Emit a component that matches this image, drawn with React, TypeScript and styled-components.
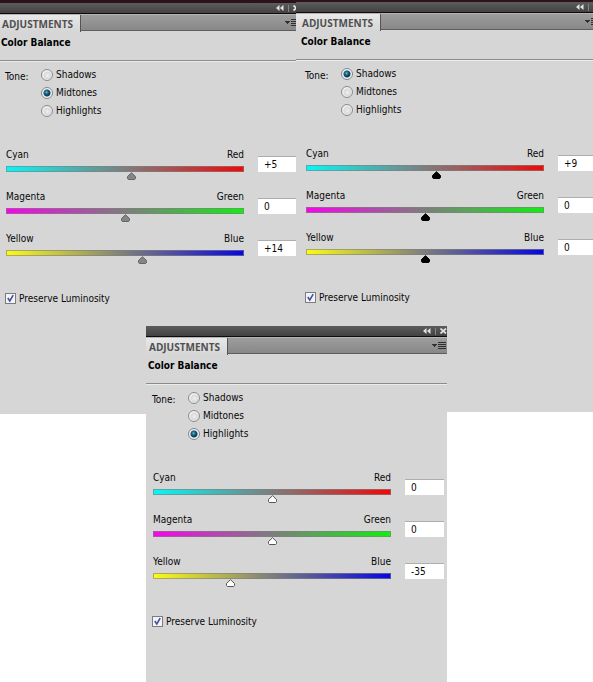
import React, { useId, useState } from "react";
import styled, { createGlobalStyle } from "styled-components";

const GlobalStyle = createGlobalStyle`
  *, *::before, *::after { box-sizing: border-box; }
  body {
    margin: 0;
    background: #fff;
    color: #080808;
    font-family: "DejaVu Sans Condensed", "DejaVu Sans", sans-serif;
    font-size: 10px;
    line-height: 14px;
    overflow-x: hidden;
  }
`;

const Page = styled.main`
  display: grid;
  grid-template-columns: minmax(0, 296fr) minmax(0, 297fr);
  align-items: start;
`;

const PanelFrame = styled.section<{ $edge: number; $bottom: number; $floating?: boolean }>`
  overflow: hidden;
  background: #d6d6d6;
  border-top: ${(p) => p.$edge}px solid #2c121b;
  padding-bottom: ${(p) => p.$bottom}px;
  ${(p) =>
    p.$floating &&
    `
    grid-column: 1 / -1;
    justify-self: center;
    margin-top: -88px;
    max-width: 100%;
  `}
`;

const PanelInner = styled.div<{ $inset: number }>`
  min-width: ${(p) => 300 + p.$inset}px;
`;

const TitleBar = styled.header`
  display: flex;
  justify-content: flex-end;
  align-items: center;
  height: 11px;
  background: linear-gradient(#5c5c5c, #424242);
  border-bottom: 1px solid #0c0c0c;
`;

const BarButton = styled.button`
  display: flex;
  padding: 0;
  border: 0;
  background: none;
  cursor: pointer;
`;

const BarSeparator = styled.span`
  width: 1px;
  height: 7px;
  margin: 0 4px;
  background: #858585;
`;

const TabBar = styled.nav`
  display: flex;
  justify-content: space-between;
  align-items: stretch;
  height: 17px;
  background: linear-gradient(#9d9d9d, #888);
  border-top: 1px solid #b4b4b4;
  border-bottom: 1px solid #5e5e5e;
`;

const Tab = styled.button<{ $inset: number }>`
  height: 17px;
  padding: 0 7px 0 ${(p) => p.$inset + 2}px;
  border: 0;
  border-right: 1px solid #555;
  background: linear-gradient(#e8e8e8, #d6d6d6);
  color: #505050;
  font: 700 10px/14px "Open Sans", "Noto Sans", sans-serif;
`;

const MenuButton = styled(BarButton)`
  align-items: center;
  padding-right: 1px;
`;

const Title = styled.h2<{ $inset: number }>`
  height: 31px;
  margin: 0;
  padding: 4px 0 0 ${(p) => p.$inset + 1}px;
  border-bottom: 1px solid #ececec;
  box-shadow: inset 0 -1px 0 #8c8c8c;
  color: #000;
  font-size: 10px;
  font-weight: bold;
  line-height: 16px;
`;

const Body = styled.div<{ $inset: number }>`
  padding: 4px 3px 0 ${(p) => p.$inset}px;
`;

const ToneGroup = styled.div`
  display: grid;
  grid-template-columns: 36px 1fr;
  padding-left: 5px;
`;

const ToneLabel = styled.span`
  padding-top: 4px;
`;

const ToneOptions = styled.div`
  display: flex;
  flex-direction: column;
`;

const Option = styled.label`
  display: flex;
  align-items: center;
  gap: 3px;
  height: 18px;
`;

const Radio = styled.input`
  appearance: none;
  width: 12px;
  height: 12px;
  margin: 0;
  border: 1px solid #8b8b8b;
  border-radius: 50%;
  background: radial-gradient(circle closest-side at 55% 55%, #efefef 0, #d9d9d9 75%, #f0f0f0 100%);
  &:checked {
    border-color: #7f8890;
    background:
      radial-gradient(circle at 45% 42%, #7ccbdc 0, #2d87a4 1px, transparent 3px),
      radial-gradient(circle at 50% 50%, #123f5c 0, #123f5c 3px, #f0f3f4 4px);
  }
`;

const Sliders = styled.div`
  display: flex;
  flex-direction: column;
  gap: 9px;
  padding: 27px 0 27px 6px;
`;

const SliderRow = styled.div`
  display: grid;
  grid-template-columns: 1fr 39px;
  column-gap: 14px;
`;

const SliderLabels = styled.div`
  display: flex;
  justify-content: space-between;
  margin: 1px 0 4px;
`;

const GradientBar = styled.div<{ $from: string; $to: string }>`
  height: 6px;
  border: 1px solid #808080a0;
  background: linear-gradient(90deg, ${(p) => p.$from}, #7d7d7d, ${(p) => p.$to}) border-box;
`;

type ToneName = "Shadows" | "Midtones" | "Highlights";

const thumbArt = (fill: string, stroke: string) =>
  `url("data:image/svg+xml,${encodeURIComponent(
    `<svg xmlns="http://www.w3.org/2000/svg" width="9" height="8"><path d="M4.5 .7L8.5 4.5V6.6L7.7 7.5H1.3L.5 6.6V4.5Z" fill="${fill}" stroke="${stroke}"/></svg>`
  )}")`;

const thumbs: Record<ToneName, string> = {
  Shadows: thumbArt("#000", "#000"),
  Midtones: thumbArt("#858585", "#666"),
  Highlights: thumbArt("#fff", "#555"),
};

const Range = styled.input<{ $tone: ToneName }>`
  appearance: none;
  display: block;
  width: calc(100% + 9px);
  height: 8px;
  margin: 0 -5px 0 -4px;
  background: none;
  &::-webkit-slider-thumb {
    appearance: none;
    width: 9px;
    height: 8px;
    border: 0;
    background: ${(p) => thumbs[p.$tone]} no-repeat;
  }
`;

const Field = styled.input`
  width: 100%;
  height: 16px;
  margin: 9px 0 0;
  padding: 0 0 0 6px;
  border: 0;
  border-top: 1px solid #adadad;
  background: #fff;
  color: #080808;
  font: inherit;
`;

const CheckRow = styled.label`
  display: flex;
  align-items: center;
  gap: 3px;
  height: 15px;
  padding-left: 5px;
`;

const CheckBox = styled.span`
  display: grid;
  width: 11px;
  height: 11px;
  > * {
    grid-area: 1 / 1;
  }
  > svg {
    pointer-events: none;
    visibility: hidden;
  }
  > input:checked + svg {
    visibility: visible;
  }
`;

const CheckInput = styled.input`
  appearance: none;
  width: 11px;
  height: 11px;
  margin: 0;
  border: 1px solid #7c7c7c;
  background: #f3f4f7;
`;

const tones: ToneName[] = ["Shadows", "Midtones", "Highlights"];

const channels = [
  { low: "Cyan", high: "Red", from: "#08f6f6", to: "#f00808" },
  { low: "Magenta", high: "Green", from: "#f605ea", to: "#12ee12" },
  { low: "Yellow", high: "Blue", from: "#fbfb18", to: "#0606e0" },
];

const signed = (n: number) => (n > 0 ? `+${n}` : String(n));

interface PanelProps {
  tone: ToneName;
  initial: number[];
  inset: number;
  edge: number;
  bottom: number;
  floating?: boolean;
}

function ColorBalancePanel({ tone, initial, inset, edge, bottom, floating }: PanelProps) {
  const id = useId();
  const [selected, setSelected] = useState<ToneName>(tone);
  const [values, setValues] = useState(initial);
  const update = (index: number, next: number) => {
    if (Number.isNaN(next)) return;
    setValues(values.map((v, i) => (i === index ? Math.max(-100, Math.min(100, next)) : v)));
  };

  return (
    <PanelFrame $edge={edge} $bottom={bottom} $floating={floating}>
      <PanelInner $inset={inset}>
        <TitleBar>
          <BarButton aria-label="Collapse panel">
            <svg width="8" height="6" viewBox="0 0 8 6" fill="#e2e2e2">
              <path d="M3.5 0V6L0 3ZM7.5 0V6L4 3Z" />
            </svg>
          </BarButton>
          <BarSeparator />
          <BarButton aria-label="Close panel">
            <svg width="7" height="6" viewBox="0 0 7 6" stroke="#e2e2e2" strokeWidth="1.7">
              <path d="M.5 .5L6 5.5M6 .5L.5 5.5" />
            </svg>
          </BarButton>
        </TitleBar>
        <TabBar>
          <Tab $inset={inset}>ADJUSTMENTS</Tab>
          <MenuButton aria-label="Panel menu">
            <svg width="14" height="7" viewBox="0 0 14 7" fill="#303030" shapeRendering="crispEdges">
              <path d="M0 2H5V3H4V4H3V5H2V4H1V3H0ZM6 0H14V1H6ZM6 2H14V3H6ZM6 4H14V5H6ZM6 6H14V7H6Z" />
            </svg>
          </MenuButton>
        </TabBar>
        <Title $inset={inset}>Color Balance</Title>
        <Body $inset={inset}>
          <ToneGroup role="radiogroup" aria-labelledby={`${id}-tone`}>
            <ToneLabel id={`${id}-tone`}>Tone:</ToneLabel>
            <ToneOptions>
              {tones.map((name) => (
                <Option key={name}>
                  <Radio
                    type="radio"
                    name={`${id}-tone`}
                    checked={selected === name}
                    onChange={() => setSelected(name)}
                  />
                  {name}
                </Option>
              ))}
            </ToneOptions>
          </ToneGroup>
          <Sliders>
            {channels.map((c, i) => (
              <SliderRow key={c.low}>
                <div>
                  <SliderLabels>
                    <label htmlFor={`${id}-range-${i}`}>{c.low}</label>
                    <label htmlFor={`${id}-field-${i}`}>{c.high}</label>
                  </SliderLabels>
                  <GradientBar $from={c.from} $to={c.to} />
                  <Range
                    id={`${id}-range-${i}`}
                    type="range"
                    min={-100}
                    max={100}
                    value={values[i]}
                    $tone={selected}
                    onChange={(e) => update(i, Number(e.target.value))}
                  />
                </div>
                <Field
                  id={`${id}-field-${i}`}
                  type="text"
                  value={signed(values[i])}
                  onChange={(e) => update(i, Number(e.target.value))}
                />
              </SliderRow>
            ))}
          </Sliders>
          <CheckRow>
            <CheckBox>
              <CheckInput type="checkbox" defaultChecked />
              <svg width="11" height="11" viewBox="0 0 11 11" fill="none" stroke="#4252a0" strokeWidth="1.6">
                <path d="M2.8 5L4.8 8L8.2 2.2" />
              </svg>
            </CheckBox>
            Preserve Luminosity
          </CheckRow>
        </Body>
      </PanelInner>
    </PanelFrame>
  );
}

export default function App() {
  return (
    <>
      <GlobalStyle />
      <Page>
        <ColorBalancePanel tone="Midtones" initial={[5, 0, 14]} inset={0} edge={3} bottom={108} />
        <ColorBalancePanel tone="Shadows" initial={[9, 0, 0]} inset={4} edge={2} bottom={107} />
        <ColorBalancePanel tone="Highlights" initial={[0, 0, -35]} inset={1} edge={0} bottom={53} floating />
      </Page>
    </>
  );
}
